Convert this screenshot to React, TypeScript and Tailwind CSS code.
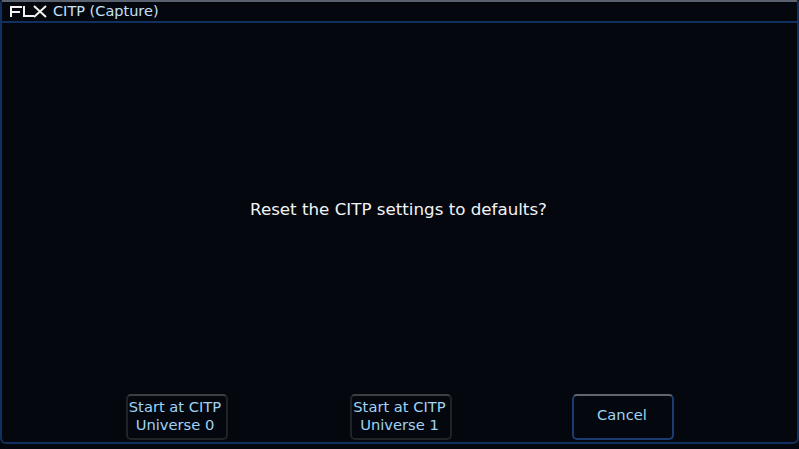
export default function App() {
  return (
    <div className="w-[799px] h-[449px] overflow-hidden bg-[#05070f] font-['DejaVu_Sans',sans-serif]">
      <div className="h-[444px] flex flex-col rounded-b-[6px] rounded-t-[3px] border-x-2 border-b-2 border-[#12305f]">
        {/* title bar */}
        <div className="h-[23px] shrink-0 flex items-center gap-[5px] pl-[8px] border-t-2 border-t-[#5a6270] border-b-2 border-b-[#12305f]">
          <svg width="38" height="13" viewBox="0 0 38 13" fill="none" stroke="#f2f2f2" strokeWidth="2">
            <path d="M1 12V2H12M1 7H10" />
            <path d="M14 1V11H24" />
            <path d="M24 1L36 12M36 1L24 12" />
          </svg>
          <span className="text-[14.5px] leading-none text-[#c4e2f7]">CITP (Capture)</span>
        </div>

        <div className="flex-1 flex items-center justify-center pt-[3px] pr-[2px]">
          <p className="text-[16.7px] text-[#f2f4f6]">Reset the CITP settings to defaults?</p>
        </div>

        {/* buttons */}
        <div className="h-[46px] mb-[2px] shrink-0 flex items-start pl-[124px]">
          <button className="w-[102px] h-[46px] pr-[4px] pb-[2px] rounded-[5px] border-2 border-[#222327] border-t-[#3c3e43] text-[14.7px] leading-[18px] text-[#9fd4f3]">
            Start at CITP
            <br />
            Universe 0
          </button>
          <button className="ml-[122px] w-[102px] h-[46px] pr-[3px] pb-[2px] rounded-[5px] border-2 border-[#222327] border-t-[#3c3e43] text-[14.7px] leading-[18px] text-[#9fd4f3]">
            Start at CITP
            <br />
            Universe 1
          </button>
          <button className="ml-[120px] w-[102px] h-[46px] pr-[2px] pb-[3px] rounded-[5px] border-2 border-[#1a3c70] border-t-[#5f6672] text-[14.7px] text-[#9fd4f3]">
            Cancel
          </button>
        </div>
      </div>
    </div>
  );
}
